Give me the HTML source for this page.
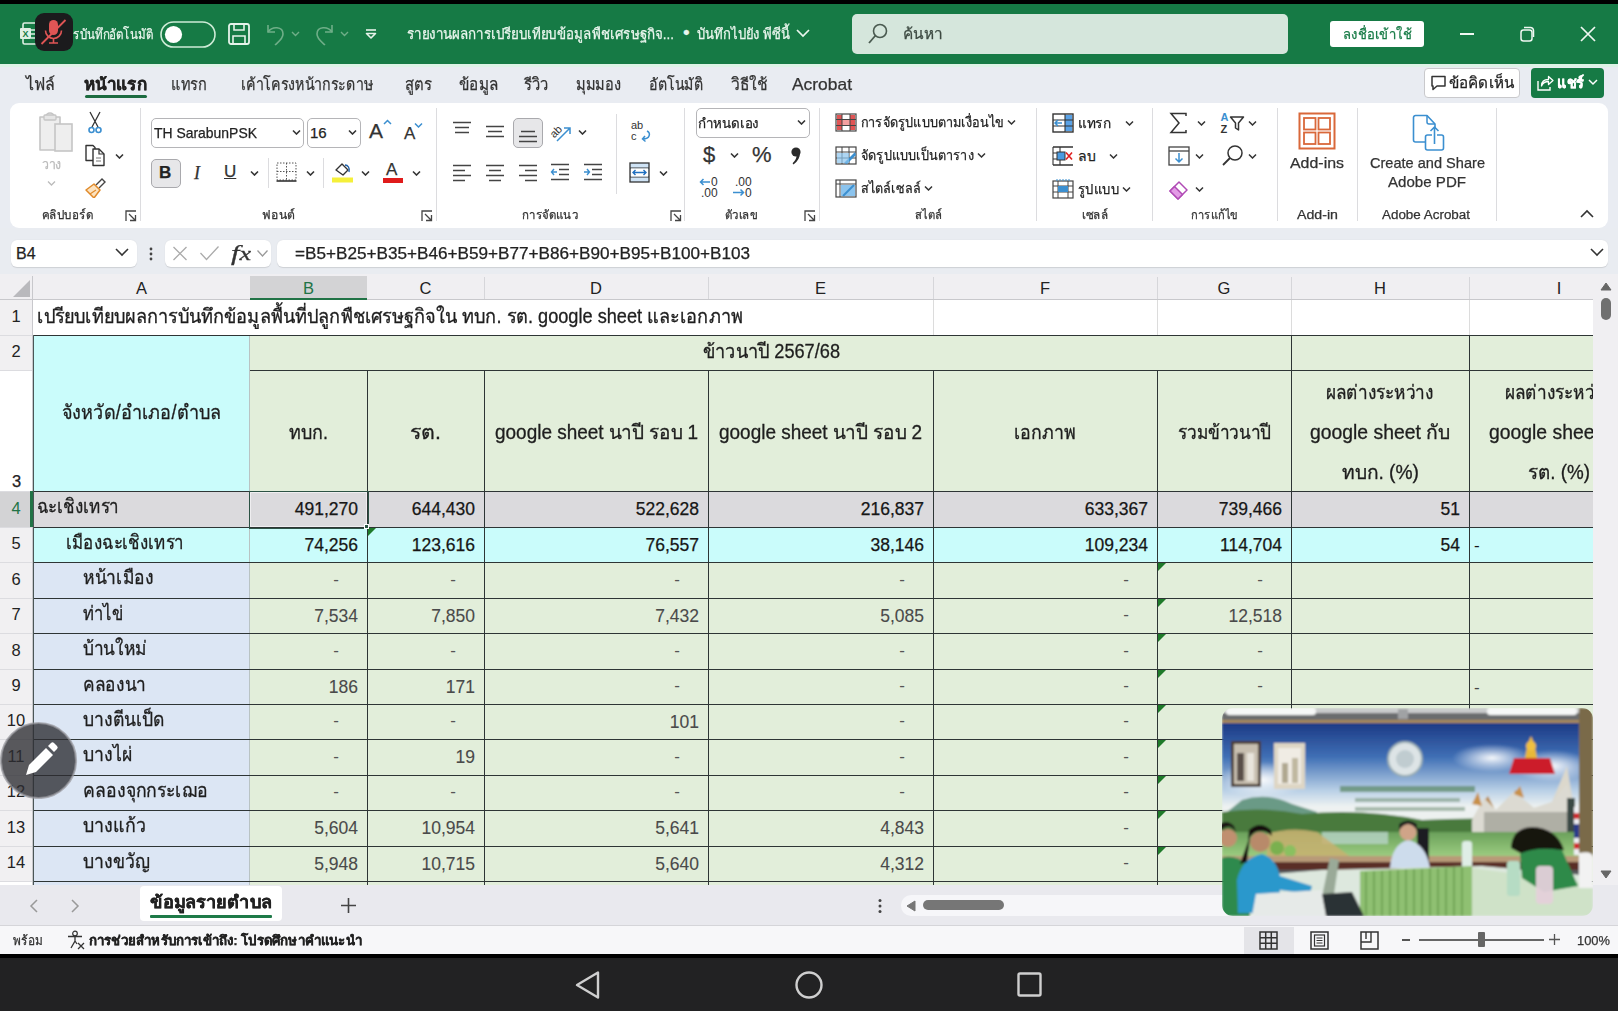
<!DOCTYPE html><html><head><meta charset="utf-8"><style>
*{margin:0;padding:0}
html,body{width:1618px;height:1011px;overflow:hidden}
body{position:relative;background:#e9ecf1;font-family:"Liberation Sans",sans-serif;color:#222}
.a{position:absolute}
.t{white-space:nowrap;line-height:1;-webkit-text-stroke-width:0.25px}
.ch{display:flex;align-items:center;justify-content:center;font-size:16.5px}
.rh{display:flex;align-items:center;justify-content:center;font-size:16.5px;padding-bottom:4px;box-sizing:border-box}
.c{position:absolute;white-space:nowrap;overflow:hidden;display:flex;align-items:center;font-size:17px;line-height:1;box-sizing:border-box}
.r{justify-content:flex-end;padding-right:9px}
.d{justify-content:flex-end;padding-right:28px;padding-bottom:4px}
.ctr{justify-content:center}
</style></head><body>
<div class="a" style="left:0px;top:0px;width:1618px;height:4px;background:#000"></div>
<div class="a" style="left:0px;top:4px;width:1618px;height:60px;background:#167a45"></div>
<div class="a" style="left:0px;top:64px;width:1618px;height:3px;background:#ddf3e6"></div>
<div class="a" style="left:0px;top:67px;width:1618px;height:161px;background:#e9ecf2"></div>
<svg class="a" style="left:19px;top:22px;" width="20" height="24" viewBox="0 0 20 24"><rect x="4" y="1" width="15" height="21" rx="1.5" fill="none" stroke="#dff0e4" stroke-width="1.6"/><rect x="1" y="6" width="11" height="11" rx="1" fill="#dff0e4"/><text x="6.5" y="15" font-size="9" font-family="Liberation Sans" font-weight="bold" text-anchor="middle" fill="#167a45">X</text><path d="M12 8h6M12 12h6M12 16h6" stroke="#dff0e4" stroke-width="1.4"/></svg>
<svg class="a" style="left:35px;top:13px;" width="38" height="38" viewBox="0 0 38 38"><rect x="0" y="0" width="38" height="38" rx="9" fill="#1b1b1d"/><rect x="14" y="7" width="9" height="15" rx="4.5" fill="#e05555"/><path d="M10.5 17.5 a8 8 0 0 0 16 0" fill="none" stroke="#e05555" stroke-width="1.6"/><path d="M18.5 25.5 v4 M14 30 h9" stroke="#e05555" stroke-width="1.6"/><path d="M6.5 31 L30.5 7" stroke="#e05555" stroke-width="1.8"/></svg>
<div class="a t" id="f1" style="left:73.0px;top:24px;font-size:14px;color:#eaf6ee;line-height:20px;transform:scaleX(0.8247);transform-origin:0 0">รบันทึกอัตโนมัติ</div>
<svg class="a" style="left:160px;top:21px;" width="56" height="27" viewBox="0 0 56 27"><rect x="1" y="1" width="54" height="25" rx="12.5" fill="none" stroke="#cdebd6" stroke-width="1.6"/><circle cx="13.5" cy="13.5" r="8.6" fill="#fff"/></svg>
<svg class="a" style="left:228px;top:23px;" width="22" height="22" viewBox="0 0 22 22"><rect x="1" y="1" width="20" height="20" rx="2" fill="none" stroke="#e6f3ea" stroke-width="1.8"/><path d="M6 1 v6 h10 v-6" fill="none" stroke="#e6f3ea" stroke-width="1.6"/><path d="M5 21 v-8 h12 v8" fill="none" stroke="#e6f3ea" stroke-width="1.6"/></svg>
<svg class="a" style="left:263px;top:22px;" width="40" height="24" viewBox="0 0 40 24"><path d="M5 3 v7 h7" fill="none" stroke="#6fae88" stroke-width="1.6"/><path d="M5 10 C9 4 20 4 20 12 C20 17 15 20 12 23" fill="none" stroke="#6fae88" stroke-width="1.6"/><path d="M29 10 l3.5 3.5 l3.5 -3.5" fill="none" stroke="#6fae88" stroke-width="1.4"/></svg>
<svg class="a" style="left:312px;top:22px;" width="40" height="24" viewBox="0 0 40 24"><path d="M20 3 v7 h-7" fill="none" stroke="#6fae88" stroke-width="1.6"/><path d="M20 10 C16 4 5 4 5 12 C5 17 10 20 13 23" fill="none" stroke="#6fae88" stroke-width="1.6"/><path d="M29 10 l3.5 3.5 l3.5 -3.5" fill="none" stroke="#6fae88" stroke-width="1.4"/></svg>
<svg class="a" style="left:364px;top:27px;" width="14" height="14" viewBox="0 0 14 14"><path d="M2 3 h10" stroke="#e6f3ea" stroke-width="1.6"/><path d="M2.5 6.5 l4.5 4.5 l4.5 -4.5 z" fill="none" stroke="#e6f3ea" stroke-width="1.6" stroke-linejoin="round"/></svg>
<div class="a t" id="f2" style="left:407.0px;top:24px;font-size:14.5px;color:#eaf6ee;line-height:20px;transform:scaleX(0.9236);transform-origin:0 0">รายงานผลการเปรียบเทียบข้อมูลพืชเศรษฐกิจ...</div>
<div class="a t" style="left:683px;top:22px;font-size:19px;color:#eaf6ee;line-height:22px">•</div>
<div class="a t" id="f3" style="left:697.0px;top:24px;font-size:14.5px;color:#eaf6ee;line-height:20px;transform:scaleX(0.9026);transform-origin:0 0">บันทึกไปยัง พีซีนี้</div>
<svg class="a" style="left:795px;top:27px;" width="16" height="12" viewBox="0 0 16 12"><path d="M2 3 l6 6 l6 -6" fill="none" stroke="#eaf6ee" stroke-width="1.7"/></svg>
<div class="a" style="left:852px;top:14px;width:436px;height:40px;background:#d5e6dc;border-radius:5px"></div>
<svg class="a" style="left:866px;top:22px;" width="24" height="24" viewBox="0 0 24 24"><circle cx="14" cy="9" r="6.5" fill="none" stroke="#4a5a50" stroke-width="1.6"/><path d="M9.5 13.5 L3 21" stroke="#4a5a50" stroke-width="1.8"/></svg>
<div class="a t" id="f4" style="left:903.0px;top:24px;font-size:15px;color:#3d4a42;line-height:20px;transform:scaleX(1.0263);transform-origin:0 0">ค้นหา</div>
<div class="a" style="left:1330px;top:21px;width:94px;height:26px;background:#fff;border-radius:3px"></div>
<div class="a t" id="f5" style="left:1343.0px;top:24px;font-size:14px;color:#167a45;line-height:20px;transform:scaleX(0.9324);transform-origin:0 0">ลงชื่อเข้าใช้</div>
<div class="a" style="left:1460px;top:33px;width:14px;height:1.5px;background:#f0f8f2"></div>
<svg class="a" style="left:1518px;top:25px;" width="20" height="18" viewBox="0 0 20 18"><rect x="3" y="5" width="11" height="11" rx="2.5" fill="none" stroke="#f0f8f2" stroke-width="1.5"/><path d="M6 2.5 h6.5 a3 3 0 0 1 3 3 v6.5" fill="none" stroke="#f0f8f2" stroke-width="1.5"/></svg>
<svg class="a" style="left:1579px;top:25px;" width="18" height="18" viewBox="0 0 18 18"><path d="M2 2 L16 16 M16 2 L2 16" stroke="#f0f8f2" stroke-width="1.7"/></svg>
<div class="a t" id="f6" style="left:26.0px;top:73px;font-size:16.5px;color:#333;line-height:22px;transform:scaleX(0.9667);transform-origin:0 0">ไฟล์</div>
<div class="a t" id="f7" style="left:84.0px;top:73px;font-size:16.5px;color:#222;line-height:22px;font-weight:bold;transform:scaleX(1.0328);transform-origin:0 0">หน้าแรก</div>
<div class="a t" id="f8" style="left:171.0px;top:73px;font-size:16.5px;color:#333;line-height:22px;transform:scaleX(0.8780);transform-origin:0 0">แทรก</div>
<div class="a t" id="f9" style="left:241.0px;top:73px;font-size:16.5px;color:#333;line-height:22px;transform:scaleX(0.8627);transform-origin:0 0">เค้าโครงหน้ากระดาษ</div>
<div class="a t" id="f10" style="left:405.0px;top:73px;font-size:16.5px;color:#333;line-height:22px;transform:scaleX(0.9000);transform-origin:0 0">สูตร</div>
<div class="a t" id="f11" style="left:459.0px;top:73px;font-size:16.5px;color:#333;line-height:22px;transform:scaleX(0.9286);transform-origin:0 0">ข้อมูล</div>
<div class="a t" id="f12" style="left:524.0px;top:73px;font-size:16.5px;color:#333;line-height:22px;transform:scaleX(0.8889);transform-origin:0 0">รีวิว</div>
<div class="a t" id="f13" style="left:576.0px;top:73px;font-size:16.5px;color:#333;line-height:22px;transform:scaleX(0.8824);transform-origin:0 0">มุมมอง</div>
<div class="a t" id="f14" style="left:649.0px;top:73px;font-size:16.5px;color:#333;line-height:22px;transform:scaleX(0.8571);transform-origin:0 0">อัตโนมัติ</div>
<div class="a t" id="f15" style="left:731.0px;top:73px;font-size:16.5px;color:#333;line-height:22px;transform:scaleX(0.9474);transform-origin:0 0">วิธีใช้</div>
<div class="a t" id="f16" style="left:792.0px;top:73px;font-size:16.5px;color:#333;line-height:22px;transform:scaleX(1.0549);transform-origin:0 0">Acrobat</div>
<div class="a" style="left:85px;top:95px;width:62px;height:3px;background:#1c6b40;border-radius:2px"></div>
<div class="a" style="left:1424px;top:68px;width:96px;height:30px;background:#fff;border:1px solid #c9c9cc;border-radius:4px;box-sizing:border-box"></div>
<svg class="a" style="left:1430px;top:74px;" width="18" height="18" viewBox="0 0 18 18"><path d="M2 2.5 h13 v9.5 h-8 l-4 3.5 v-3.5 h-1 z" fill="none" stroke="#333" stroke-width="1.5" stroke-linejoin="round"/></svg>
<div class="a t" id="f17" style="left:1449.0px;top:73px;font-size:15px;color:#222;line-height:20px;transform:scaleX(1.0156);transform-origin:0 0">ข้อคิดเห็น</div>
<div class="a" style="left:1531px;top:68px;width:73px;height:30px;background:#167a45;border-radius:4px"></div>
<svg class="a" style="left:1536px;top:74px;" width="18" height="18" viewBox="0 0 18 18"><path d="M2 7 v9 h12 v-3" fill="none" stroke="#fff" stroke-width="1.4"/><path d="M5.5 12 c0-4.5 2.5-6.5 7-6.5 v-3 l4.5 4 l-4.5 4 v-3 c-3.5 0-5.5 1-7 4.5z" fill="none" stroke="#fff" stroke-width="1.3" stroke-linejoin="round"/></svg>
<div class="a t" id="f18" style="left:1557.0px;top:73px;font-size:15px;color:#fff;line-height:20px;font-weight:bold;transform:scaleX(0.9643);transform-origin:0 0">แชร์</div>
<svg class="a" style="left:1588px;top:78px;" width="10" height="8" viewBox="0 0 10 8"><path d="M1 2 l4 4 l4 -4" fill="none" stroke="#fff" stroke-width="1.5"/></svg>
<div class="a" style="left:10px;top:103px;width:1598px;height:125px;background:#fff;border-radius:9px"></div>
<svg class="a" style="left:36px;top:112px;" width="38" height="41" viewBox="0 0 38 41"><path d="M4 5 h6 a4 4 0 0 1 8 0 h6 v9 h-4 v24 h-16 z" fill="#eee" stroke="#c5c5c5" stroke-width="1.6" stroke-linejoin="round"/><rect x="8" y="3" width="12" height="5" rx="1" fill="#e5e5e5" stroke="#c5c5c5" stroke-width="1.3"/><rect x="19" y="12" width="17" height="27" fill="#eee" stroke="#c5c5c5" stroke-width="1.6"/></svg>
<div class="a t" id="f19" style="left:42.0px;top:157px;font-size:13px;color:#bbb;line-height:16px;transform:scaleX(0.9500);transform-origin:0 0">วาง</div>
<svg class="a" style="left:47px;top:180px;" width="9" height="6" viewBox="0 0 9 6"><path d="M1 1.5 l3.5 3.5 l3.5 -3.5" fill="none" stroke="#bbb" stroke-width="1.3"/></svg>
<svg class="a" style="left:87px;top:111px;" width="16" height="23" viewBox="0 0 16 23"><path d="M3 1 L11 16 M13 1 L5 16" stroke="#333" stroke-width="1.3"/><circle cx="4.5" cy="19" r="2.5" fill="none" stroke="#3b8fd0" stroke-width="1.6"/><circle cx="11.5" cy="19" r="2.5" fill="none" stroke="#3b8fd0" stroke-width="1.6"/></svg>
<svg class="a" style="left:84px;top:144px;" width="23" height="23" viewBox="0 0 23 23"><path d="M2 1.5 h7 l2 2 v13 h-9 z" fill="#fff" stroke="#333" stroke-width="1.4" stroke-linejoin="round"/><path d="M9 5 h6 l5 5 v11.5 h-11 z" fill="#fff" stroke="#333" stroke-width="1.4" stroke-linejoin="round"/><path d="M15 5 v5 h5" fill="none" stroke="#333" stroke-width="1.2"/><path d="M12 14 h5 M12 17 h5" stroke="#777" stroke-width="1"/></svg>
<svg class="a" style="left:115px;top:153px;" width="9" height="6" viewBox="0 0 9 6"><path d="M1 1.5 l3.5 3.5 l3.5 -3.5" fill="none" stroke="#333" stroke-width="1.6"/></svg>
<svg class="a" style="left:84px;top:176px;" width="24" height="22" viewBox="0 0 24 22"><path d="M12 9 l6-6 l3 3 l-6 6" fill="#fff" stroke="#444" stroke-width="1.4"/><path d="M2 14 l8-6 l6 6 l-6 8 z" fill="#fce3c0" stroke="#e08a2a" stroke-width="1.5" stroke-linejoin="round"/><path d="M6 18 l6-4" stroke="#e08a2a" stroke-width="1.2"/></svg>
<div class="a t" id="f20" style="left:42.0px;top:207px;font-size:12.5px;color:#333;line-height:16px;transform:scaleX(0.9273);transform-origin:0 0">คลิปบอร์ด</div>
<svg class="a" style="left:125px;top:210px;" width="12" height="12" viewBox="0 0 12 12"><path d="M1 11 V1 H11" fill="none" stroke="#444" stroke-width="1.3"/><path d="M4 4 L10.5 10.5 M5 10.5 H10.5 V5" fill="none" stroke="#444" stroke-width="1.3"/></svg>
<div class="a" style="left:140px;top:108px;width:1px;height:113px;background:#dcdcdf"></div>
<div class="a" style="left:151px;top:118px;width:153px;height:30px;border:1px solid #b5b5b8;border-radius:5px;box-sizing:border-box;background:#fff"></div>
<div class="a t" id="f21" style="left:154.0px;top:124px;font-size:15px;color:#222;line-height:18px;transform:scaleX(0.9288);transform-origin:0 0">TH SarabunPSK</div>
<svg class="a" style="left:292px;top:129px;" width="9" height="6" viewBox="0 0 9 6"><path d="M1 1.5 l3.5 3.5 l3.5 -3.5" fill="none" stroke="#333" stroke-width="1.6"/></svg>
<div class="a" style="left:307px;top:118px;width:54px;height:30px;border:1px solid #b5b5b8;border-radius:5px;box-sizing:border-box;background:#fff"></div>
<div class="a t" style="left:310px;top:124px;font-size:15px;color:#222;line-height:18px">16</div>
<svg class="a" style="left:348px;top:129px;" width="9" height="6" viewBox="0 0 9 6"><path d="M1 1.5 l3.5 3.5 l3.5 -3.5" fill="none" stroke="#333" stroke-width="1.6"/></svg>
<div class="a t" style="left:369px;top:120px;font-size:21px;color:#333;line-height:22px">A</div>
<svg class="a" style="left:383px;top:119px;" width="9" height="6" viewBox="0 0 9 6"><path d="M1 5 l3.5 -3.5 l3.5 3.5" fill="none" stroke="#3b8fd0" stroke-width="1.5"/></svg>
<div class="a t" style="left:404px;top:125px;font-size:17px;color:#333;line-height:18px">A</div>
<svg class="a" style="left:414px;top:122px;" width="9" height="6" viewBox="0 0 9 6"><path d="M1 1.5 l3.5 3.5 l3.5 -3.5" fill="none" stroke="#3b8fd0" stroke-width="1.5"/></svg>
<div class="a" style="left:151px;top:159px;width:30px;height:29px;background:#e7e7e9;border:1px solid #a9a9ad;border-radius:5px;box-sizing:border-box"></div>
<div class="a t" style="left:159px;top:164px;font-size:17px;color:#222;line-height:18px;font-weight:bold">B</div>
<div class="a t" style="left:194px;top:164px;font-size:18px;color:#333;line-height:18px;font-style:italic;font-family:Liberation Serif">I</div>
<div class="a t" style="left:224px;top:163px;font-size:17px;color:#333;line-height:18px;text-decoration:underline">U</div>
<svg class="a" style="left:250px;top:170px;" width="9" height="6" viewBox="0 0 9 6"><path d="M1 1.5 l3.5 3.5 l3.5 -3.5" fill="none" stroke="#333" stroke-width="1.6"/></svg>
<div class="a" style="left:268px;top:158px;width:1px;height:30px;background:#dcdcdf"></div>
<svg class="a" style="left:275px;top:161px;" width="23" height="22" viewBox="0 0 23 22"><path d="M2 2 h19 v17 h-19 z M11.5 2 v17 M2 10.5 h19" fill="none" stroke="#555" stroke-width="1" stroke-dasharray="1.5 1.5"/><path d="M1.5 20 h20" stroke="#333" stroke-width="1.6"/></svg>
<svg class="a" style="left:306px;top:170px;" width="9" height="6" viewBox="0 0 9 6"><path d="M1 1.5 l3.5 3.5 l3.5 -3.5" fill="none" stroke="#333" stroke-width="1.6"/></svg>
<div class="a" style="left:323px;top:158px;width:1px;height:30px;background:#dcdcdf"></div>
<svg class="a" style="left:332px;top:161px;" width="22" height="23" viewBox="0 0 22 23"><path d="M4 9 l6-6 l6 6 l-5 5 z" fill="#fff" stroke="#333" stroke-width="1.4" stroke-linejoin="round"/><path d="M13 4 c3 0 5 3 4 7" fill="none" stroke="#1f5fa8" stroke-width="1.4"/><rect x="0" y="16.5" width="21" height="5" fill="#f5f03a"/></svg>
<svg class="a" style="left:361px;top:170px;" width="9" height="6" viewBox="0 0 9 6"><path d="M1 1.5 l3.5 3.5 l3.5 -3.5" fill="none" stroke="#333" stroke-width="1.6"/></svg>
<div class="a t" style="left:386px;top:161px;font-size:17px;color:#333;line-height:18px">A</div>
<div class="a" style="left:383px;top:178px;width:20px;height:5px;background:#e01b1b"></div>
<svg class="a" style="left:412px;top:170px;" width="9" height="6" viewBox="0 0 9 6"><path d="M1 1.5 l3.5 3.5 l3.5 -3.5" fill="none" stroke="#333" stroke-width="1.6"/></svg>
<div class="a t" id="f22" style="left:262.0px;top:207px;font-size:12.5px;color:#333;line-height:16px;transform:scaleX(0.9706);transform-origin:0 0">ฟอนต์</div>
<svg class="a" style="left:421px;top:210px;" width="12" height="12" viewBox="0 0 12 12"><path d="M1 11 V1 H11" fill="none" stroke="#444" stroke-width="1.3"/><path d="M4 4 L10.5 10.5 M5 10.5 H10.5 V5" fill="none" stroke="#444" stroke-width="1.3"/></svg>
<div class="a" style="left:436px;top:108px;width:1px;height:113px;background:#dcdcdf"></div>
<svg class="a" style="left:452px;top:121px;" width="21" height="13" viewBox="0 0 21 13"><path d="M1 1.5 H19 M3 6.5 H17 M3 11.5 H17 " stroke="#444" stroke-width="1.7"/></svg>
<svg class="a" style="left:485px;top:125px;" width="21" height="13" viewBox="0 0 21 13"><path d="M1 1.5 H19 M3 6.5 H17 M1 11.5 H19 " stroke="#444" stroke-width="1.7"/></svg>
<div class="a" style="left:513px;top:118px;width:30px;height:30px;background:#e7e7e9;border:1px solid #a9a9ad;border-radius:5px;box-sizing:border-box"></div>
<svg class="a" style="left:518px;top:130px;" width="21" height="13" viewBox="0 0 21 13"><path d="M3 1.5 H17 M1 6.5 H19 M1 11.5 H19 " stroke="#444" stroke-width="1.7"/></svg>
<svg class="a" style="left:549px;top:120px;" width="24" height="24" viewBox="0 0 24 24"><text x="0" y="14" font-size="11" font-family="Liberation Sans" fill="#333" transform="rotate(-45 8 10)">ab</text><path d="M8 21 L21 8 M15 8 h6 v6" fill="none" stroke="#3b8fd0" stroke-width="1.5"/></svg>
<svg class="a" style="left:578px;top:129px;" width="9" height="6" viewBox="0 0 9 6"><path d="M1 1.5 l3.5 3.5 l3.5 -3.5" fill="none" stroke="#333" stroke-width="1.6"/></svg>
<svg class="a" style="left:452px;top:164px;" width="21" height="18" viewBox="0 0 21 18"><path d="M1 1.5 H19 M1 6.5 H13 M1 11.5 H19 M1 16.5 H13 " stroke="#444" stroke-width="1.7"/></svg>
<svg class="a" style="left:485px;top:164px;" width="21" height="18" viewBox="0 0 21 18"><path d="M1 1.5 H19 M4 6.5 H16 M1 11.5 H19 M4 16.5 H16 " stroke="#444" stroke-width="1.7"/></svg>
<svg class="a" style="left:518px;top:164px;" width="21" height="18" viewBox="0 0 21 18"><path d="M1 1.5 H19 M7 6.5 H19 M1 11.5 H19 M7 16.5 H19 " stroke="#444" stroke-width="1.7"/></svg>
<svg class="a" style="left:550px;top:163px;" width="22" height="20" viewBox="0 0 22 20"><path d="M1 1.5 H19 M9 6.5 H19 M9 11.5 H19 M1 16.5 H19" stroke="#444" stroke-width="1.7"/><path d="M7 9 H1.5 M4 6 L1.5 9 L4 12" fill="none" stroke="#3b8fd0" stroke-width="1.4"/></svg>
<svg class="a" style="left:583px;top:163px;" width="22" height="20" viewBox="0 0 22 20"><path d="M1 1.5 H19 M9 6.5 H19 M9 11.5 H19 M1 16.5 H19" stroke="#444" stroke-width="1.7"/><path d="M1 9 H6.5 M4 6 L6.5 9 L4 12" fill="none" stroke="#3b8fd0" stroke-width="1.4"/></svg>
<div class="a" style="left:616px;top:114px;width:1px;height:80px;background:#dcdcdf"></div>
<svg class="a" style="left:630px;top:119px;" width="24" height="25" viewBox="0 0 24 25"><text x="1" y="10" font-size="11" font-family="Liberation Sans" fill="#333">ab</text><text x="1" y="21" font-size="11" font-family="Liberation Sans" fill="#333">c</text><path d="M17 12 c4 2 3 8 -4 8 M15 17 l-2.5 3 l3 2.5" fill="none" stroke="#3b8fd0" stroke-width="1.5"/></svg>
<svg class="a" style="left:629px;top:162px;" width="21" height="21" viewBox="0 0 21 21"><rect x="1" y="1" width="19" height="19" fill="#cfe3f5" stroke="#333" stroke-width="1.3"/><path d="M1 6 H20 M1 15 H20" stroke="#333" stroke-width="1"/><rect x="2" y="6.5" width="17" height="8" fill="#fff"/><path d="M4 10.5 H17 M6.5 8 L4 10.5 L6.5 13 M14.5 8 L17 10.5 L14.5 13" fill="none" stroke="#1f6fc0" stroke-width="1.4"/></svg>
<svg class="a" style="left:659px;top:170px;" width="9" height="6" viewBox="0 0 9 6"><path d="M1 1.5 l3.5 3.5 l3.5 -3.5" fill="none" stroke="#333" stroke-width="1.6"/></svg>
<div class="a t" id="f23" style="left:522.0px;top:207px;font-size:12.5px;color:#333;line-height:16px;transform:scaleX(0.9180);transform-origin:0 0">การจัดแนว</div>
<svg class="a" style="left:670px;top:210px;" width="12" height="12" viewBox="0 0 12 12"><path d="M1 11 V1 H11" fill="none" stroke="#444" stroke-width="1.3"/><path d="M4 4 L10.5 10.5 M5 10.5 H10.5 V5" fill="none" stroke="#444" stroke-width="1.3"/></svg>
<div class="a" style="left:684px;top:108px;width:1px;height:113px;background:#dcdcdf"></div>
<div class="a" style="left:696px;top:108px;width:114px;height:30px;border:1px solid #b5b5b8;border-radius:5px;box-sizing:border-box;background:#fff"></div>
<div class="a t" id="f24" style="left:698.0px;top:114px;font-size:14px;color:#222;line-height:18px;transform:scaleX(0.9531);transform-origin:0 0">กำหนดเอง</div>
<svg class="a" style="left:797px;top:119px;" width="9" height="6" viewBox="0 0 9 6"><path d="M1 1.5 l3.5 3.5 l3.5 -3.5" fill="none" stroke="#333" stroke-width="1.6"/></svg>
<div class="a t" style="left:703px;top:144px;font-size:22px;color:#333;line-height:22px">$</div>
<svg class="a" style="left:730px;top:152px;" width="9" height="6" viewBox="0 0 9 6"><path d="M1 1.5 l3.5 3.5 l3.5 -3.5" fill="none" stroke="#333" stroke-width="1.6"/></svg>
<div class="a t" style="left:752px;top:144px;font-size:22px;color:#333;line-height:22px">%</div>
<svg class="a" style="left:790px;top:146px;" width="12" height="20" viewBox="0 0 12 20"><circle cx="6" cy="6" r="4.6" fill="#2a2a2a"/><path d="M9.8 6.5 Q10.5 13 3.5 18.5 L2.6 17.2 Q7 13 6.5 9 Z" fill="#2a2a2a"/></svg>
<svg class="a" style="left:698px;top:175px;" width="26" height="24" viewBox="0 0 26 24"><text x="13" y="10.5" font-size="12" font-family="Liberation Sans" fill="#333">0</text><text x="3" y="22" font-size="12" font-family="Liberation Sans" fill="#333">.00</text><path d="M12 7 H2.5 M5.5 4 L2.5 7 L5.5 10" fill="none" stroke="#3b8fd0" stroke-width="1.5"/></svg>
<svg class="a" style="left:731px;top:175px;" width="26" height="24" viewBox="0 0 26 24"><text x="4" y="10.5" font-size="12" font-family="Liberation Sans" fill="#333">.00</text><text x="14" y="22" font-size="12" font-family="Liberation Sans" fill="#333">0</text><path d="M2 17.5 H12.5 M9.5 14.5 L12.5 17.5 L9.5 20.5" fill="none" stroke="#3b8fd0" stroke-width="1.5"/></svg>
<div class="a t" id="f25" style="left:725.2px;top:207px;font-size:12.5px;color:#333;line-height:16px;transform:scaleX(0.9167);transform-origin:0 0">ตัวเลข</div>
<svg class="a" style="left:804px;top:210px;" width="12" height="12" viewBox="0 0 12 12"><path d="M1 11 V1 H11" fill="none" stroke="#444" stroke-width="1.3"/><path d="M4 4 L10.5 10.5 M5 10.5 H10.5 V5" fill="none" stroke="#444" stroke-width="1.3"/></svg>
<div class="a" style="left:819px;top:108px;width:1px;height:113px;background:#dcdcdf"></div>
<svg class="a" style="left:835px;top:113px;" width="22" height="19" viewBox="0 0 22 19"><rect x="1" y="1" width="20" height="17" fill="#fff" stroke="#444" stroke-width="1.2"/><rect x="2" y="2" width="5" height="15" fill="#e05555"/><rect x="15" y="2" width="5" height="15" fill="#e05555"/><rect x="7" y="7" width="8" height="5" fill="#f4a0a0"/><path d="M1 6.5 H21 M1 12.5 H21 M7 1 V18 M15 1 V18" stroke="#444" stroke-width="1"/></svg>
<div class="a t" id="f26" style="left:861.0px;top:113px;font-size:14px;color:#222;line-height:18px;transform:scaleX(0.9051);transform-origin:0 0">การจัดรูปแบบตามเงื่อนไข</div>
<svg class="a" style="left:1007px;top:119px;" width="9" height="6" viewBox="0 0 9 6"><path d="M1 1.5 l3.5 3.5 l3.5 -3.5" fill="none" stroke="#333" stroke-width="1.5"/></svg>
<svg class="a" style="left:835px;top:146px;" width="22" height="19" viewBox="0 0 22 19"><rect x="1" y="1" width="20" height="17" fill="#fff" stroke="#444" stroke-width="1.2"/><path d="M1 6 H21 M1 12 H21 M7 1 V18 M14 1 V18" stroke="#444" stroke-width="1"/><path d="M9 17 L20 6 L21 9 L12 18 z" fill="#3b8fd0"/><path d="M2 7 h12 v10 h-12z" fill="#8cc4ee" opacity=".7"/></svg>
<div class="a t" id="f27" style="left:861.0px;top:146px;font-size:14px;color:#222;line-height:18px;transform:scaleX(0.9040);transform-origin:0 0">จัดรูปแบบเป็นตาราง</div>
<svg class="a" style="left:977px;top:152px;" width="9" height="6" viewBox="0 0 9 6"><path d="M1 1.5 l3.5 3.5 l3.5 -3.5" fill="none" stroke="#333" stroke-width="1.5"/></svg>
<svg class="a" style="left:835px;top:179px;" width="22" height="19" viewBox="0 0 22 19"><rect x="1" y="1" width="20" height="17" fill="#fff" stroke="#444" stroke-width="1.2"/><path d="M1 5 H21 M5 1 V18" stroke="#444" stroke-width="1"/><path d="M6 6 h14 v11 h-14z" fill="#8cc4ee"/><path d="M8 17 L19 6" stroke="#3b8fd0" stroke-width="2"/></svg>
<div class="a t" id="f28" style="left:861.0px;top:179px;font-size:14px;color:#222;line-height:18px;transform:scaleX(0.8955);transform-origin:0 0">สไตล์เซลล์</div>
<svg class="a" style="left:924px;top:185px;" width="9" height="6" viewBox="0 0 9 6"><path d="M1 1.5 l3.5 3.5 l3.5 -3.5" fill="none" stroke="#333" stroke-width="1.5"/></svg>
<div class="a t" id="f29" style="left:914.7px;top:207px;font-size:12.5px;color:#333;line-height:16px;transform:scaleX(0.9000);transform-origin:0 0">สไตล์</div>
<div class="a" style="left:1036px;top:108px;width:1px;height:113px;background:#dcdcdf"></div>
<svg class="a" style="left:1052px;top:113px;" width="22" height="20" viewBox="0 0 22 20"><rect x="1" y="1" width="20" height="18" fill="#fff" stroke="#333" stroke-width="1.4"/><rect x="13" y="2" width="7" height="16" fill="#5aa2e6"/><path d="M1 7 H21 M1 13 H21 M13 1 V19" stroke="#333" stroke-width="1.1"/><path d="M10 10 H3 M6 7 L3 10 L6 13" fill="none" stroke="#3b8fd0" stroke-width="1.5"/></svg>
<div class="a t" id="f30" style="left:1078.0px;top:114px;font-size:14px;color:#222;line-height:18px;transform:scaleX(0.9706);transform-origin:0 0">แทรก</div>
<svg class="a" style="left:1125px;top:120px;" width="9" height="6" viewBox="0 0 9 6"><path d="M1 1.5 l3.5 3.5 l3.5 -3.5" fill="none" stroke="#333" stroke-width="1.5"/></svg>
<svg class="a" style="left:1052px;top:146px;" width="22" height="20" viewBox="0 0 22 20"><path d="M1 1 H21 M1 19 H21" stroke="#333" stroke-width="1.4"/><path d="M1 1 V19 M8 1 V19" stroke="#333" stroke-width="1.1"/><path d="M1 7 H13 M1 13 H13" stroke="#333" stroke-width="1.1"/><rect x="5" y="6" width="8" height="8" fill="#4a9ae0" stroke="#333" stroke-width="1"/><path d="M14 6.5 l6 7 M20 6.5 l-6 7" stroke="#e02020" stroke-width="1.6"/></svg>
<div class="a t" id="f31" style="left:1078.0px;top:147px;font-size:14px;color:#222;line-height:18px;transform:scaleX(1.0000);transform-origin:0 0">ลบ</div>
<svg class="a" style="left:1109px;top:153px;" width="9" height="6" viewBox="0 0 9 6"><path d="M1 1.5 l3.5 3.5 l3.5 -3.5" fill="none" stroke="#333" stroke-width="1.5"/></svg>
<svg class="a" style="left:1052px;top:179px;" width="22" height="20" viewBox="0 0 22 20"><rect x="1" y="2" width="20" height="17" fill="#fff" stroke="#444" stroke-width="1.2"/><path d="M1 7 H21 M1 13 H21 M6 2 V19 M16 2 V19" stroke="#444" stroke-width="1"/><rect x="6" y="7" width="10" height="6" fill="#3b8fd0"/><path d="M4 1 H18" stroke="#3b8fd0" stroke-width="1.2" stroke-dasharray="2 1"/></svg>
<div class="a t" id="f32" style="left:1078.0px;top:180px;font-size:14px;color:#222;line-height:18px;transform:scaleX(0.9318);transform-origin:0 0">รูปแบบ</div>
<svg class="a" style="left:1122px;top:186px;" width="9" height="6" viewBox="0 0 9 6"><path d="M1 1.5 l3.5 3.5 l3.5 -3.5" fill="none" stroke="#333" stroke-width="1.5"/></svg>
<div class="a t" id="f33" style="left:1082.3px;top:207px;font-size:12.5px;color:#333;line-height:16px;transform:scaleX(0.9286);transform-origin:0 0">เซลล์</div>
<div class="a" style="left:1152px;top:108px;width:1px;height:113px;background:#dcdcdf"></div>
<svg class="a" style="left:1169px;top:112px;" width="20" height="22" viewBox="0 0 20 22"><path d="M17 4 V1.5 H2 L10 11 L2 20.5 H17 V18" fill="none" stroke="#333" stroke-width="1.5" stroke-linejoin="miter"/></svg>
<svg class="a" style="left:1197px;top:120px;" width="9" height="6" viewBox="0 0 9 6"><path d="M1 1.5 l3.5 3.5 l3.5 -3.5" fill="none" stroke="#333" stroke-width="1.5"/></svg>
<svg class="a" style="left:1220px;top:111px;" width="26" height="24" viewBox="0 0 26 24"><text x="0.5" y="10" font-size="11" font-weight="bold" font-family="Liberation Sans" fill="#3b8fd0">A</text><text x="0.5" y="22" font-size="11" font-weight="bold" font-family="Liberation Sans" fill="#333">Z</text><path d="M10.5 6 H23.5 L18.5 12 V19 L15.5 17 V12 z" fill="none" stroke="#333" stroke-width="1.5" stroke-linejoin="round"/></svg>
<svg class="a" style="left:1248px;top:120px;" width="9" height="6" viewBox="0 0 9 6"><path d="M1 1.5 l3.5 3.5 l3.5 -3.5" fill="none" stroke="#333" stroke-width="1.5"/></svg>
<svg class="a" style="left:1168px;top:146px;" width="22" height="20" viewBox="0 0 22 20"><rect x="1" y="1" width="20" height="18" fill="#fff" stroke="#444" stroke-width="1.3"/><path d="M1 5 H21" stroke="#444" stroke-width="1.3"/><path d="M11 7 V16 M7.5 12.5 L11 16 L14.5 12.5" fill="none" stroke="#3b8fd0" stroke-width="1.5"/></svg>
<svg class="a" style="left:1195px;top:153px;" width="9" height="6" viewBox="0 0 9 6"><path d="M1 1.5 l3.5 3.5 l3.5 -3.5" fill="none" stroke="#333" stroke-width="1.5"/></svg>
<svg class="a" style="left:1221px;top:144px;" width="24" height="23" viewBox="0 0 24 23"><circle cx="14" cy="9" r="7" fill="none" stroke="#333" stroke-width="1.5"/><path d="M9 14 L2 21" stroke="#333" stroke-width="1.8"/></svg>
<svg class="a" style="left:1248px;top:153px;" width="9" height="6" viewBox="0 0 9 6"><path d="M1 1.5 l3.5 3.5 l3.5 -3.5" fill="none" stroke="#333" stroke-width="1.5"/></svg>
<svg class="a" style="left:1167px;top:178px;" width="24" height="22" viewBox="0 0 24 22"><path d="M3 13 L12 4 L20 12 L11 21 z" fill="#fff" stroke="#b04ab5" stroke-width="1.5" stroke-linejoin="round"/><path d="M3 13 L7.5 8.5 L15.5 16.5 L11 21 z" fill="#e39be6" stroke="#b04ab5" stroke-width="1.5" stroke-linejoin="round"/></svg>
<svg class="a" style="left:1195px;top:186px;" width="9" height="6" viewBox="0 0 9 6"><path d="M1 1.5 l3.5 3.5 l3.5 -3.5" fill="none" stroke="#333" stroke-width="1.5"/></svg>
<div class="a t" id="f34" style="left:1191.2px;top:207px;font-size:12.5px;color:#333;line-height:16px;transform:scaleX(0.8868);transform-origin:0 0">การแก้ไข</div>
<div class="a" style="left:1277px;top:108px;width:1px;height:113px;background:#dcdcdf"></div>
<svg class="a" style="left:1298px;top:112px;" width="38" height="38" viewBox="0 0 38 38"><rect x="1.5" y="1.5" width="35" height="35" fill="none" stroke="#d9683a" stroke-width="2"/><rect x="6" y="6" width="11.5" height="11.5" fill="none" stroke="#d9683a" stroke-width="1.8"/><rect x="20.5" y="6" width="11.5" height="11.5" fill="none" stroke="#d9683a" stroke-width="1.8"/><rect x="6" y="20.5" width="11.5" height="11.5" fill="none" stroke="#d9683a" stroke-width="1.8"/><rect x="20.5" y="20.5" width="11.5" height="11.5" fill="none" stroke="#d9683a" stroke-width="1.8"/></svg>
<div class="a t" id="f35" style="left:1290.0px;top:154px;font-size:15px;color:#333;line-height:18px;transform:scaleX(1.0618);transform-origin:0 0">Add-ins</div>
<div class="a t" id="f36" style="left:1296.5px;top:207px;font-size:12.5px;color:#333;line-height:16px;transform:scaleX(1.1345);transform-origin:0 0">Add-in</div>
<div class="a" style="left:1357px;top:108px;width:1px;height:113px;background:#dcdcdf"></div>
<svg class="a" style="left:1412px;top:114px;" width="38" height="38" viewBox="0 0 38 38"><path d="M13 28 H3.5 a2 2 0 0 1 -2 -2 V3.5 a2 2 0 0 1 2 -2 H15 L23 10 V15" fill="none" stroke="#3b8fd0" stroke-width="1.6" stroke-linejoin="round"/><path d="M15 1.5 V8 a2 2 0 0 0 2 2 H23" fill="none" stroke="#3b8fd0" stroke-width="1.5"/><path d="M20 21 H15.5 a2 2 0 0 0 -2 2 V34 a2 2 0 0 0 2 2 H29.5 a2 2 0 0 0 2 -2 V23 a2 2 0 0 0 -2 -2 H25" fill="none" stroke="#3b8fd0" stroke-width="1.6"/><path d="M22.5 30 V13 M18.5 17 L22.5 13 L26.5 17" fill="none" stroke="#3b8fd0" stroke-width="1.6" stroke-linejoin="round"/></svg>
<div class="a t" id="f37" style="left:1370.0px;top:154px;font-size:15px;color:#333;line-height:18px;transform:scaleX(0.9711);transform-origin:0 0">Create and Share</div>
<div class="a t" id="f38" style="left:1388.0px;top:173px;font-size:15px;color:#333;line-height:18px;transform:scaleX(1.0058);transform-origin:0 0">Adobe PDF</div>
<div class="a t" id="f39" style="left:1382.0px;top:207px;font-size:12.5px;color:#333;line-height:16px;transform:scaleX(1.0730);transform-origin:0 0">Adobe Acrobat</div>
<div class="a" style="left:1496px;top:108px;width:1px;height:113px;background:#dcdcdf"></div>
<svg class="a" style="left:1579px;top:209px;" width="16" height="10" viewBox="0 0 16 10"><path d="M2 8 L8 2 L14 8" fill="none" stroke="#333" stroke-width="1.6"/></svg>
<div class="a" style="left:11px;top:240px;width:126px;height:27px;background:#fff;border-radius:6px;box-shadow:0 0.5px 1px rgba(0,0,0,.12)"></div>
<div class="a t" style="left:16px;top:245px;font-size:16px;color:#222;line-height:18px">B4</div>
<svg class="a" style="left:114px;top:247px;" width="16" height="10" viewBox="0 0 16 10"><path d="M2 2 L8 8 L14 2" fill="none" stroke="#333" stroke-width="1.6"/></svg>
<svg class="a" style="left:148px;top:247px;" width="6" height="14" viewBox="0 0 6 14"><circle cx="3" cy="2" r="1.4" fill="#444"/><circle cx="3" cy="7" r="1.4" fill="#444"/><circle cx="3" cy="12" r="1.4" fill="#444"/></svg>
<div class="a" style="left:165px;top:240px;width:106px;height:27px;background:#fff;border-radius:6px;box-shadow:0 0.5px 1px rgba(0,0,0,.12)"></div>
<svg class="a" style="left:172px;top:246px;" width="16" height="15" viewBox="0 0 16 15"><path d="M1.5 1 L14.5 14 M14.5 1 L1.5 14" stroke="#aaa" stroke-width="1.3"/></svg>
<svg class="a" style="left:199px;top:245px;" width="21" height="16" viewBox="0 0 21 16"><path d="M1.5 8 L7.5 14.5 L19.5 1.5" fill="none" stroke="#aaa" stroke-width="1.3"/></svg>
<div class="a t" id="f40" style="left:231.0px;top:242px;font-size:22px;color:#333;line-height:22px;font-family:Liberation Serif;-webkit-text-stroke:0.3px #333;transform:scaleX(1.3734);transform-origin:0 0"><i>f</i><span style="font-size:19px"><i>x</i></span></div>
<svg class="a" style="left:256px;top:249px;" width="13" height="9" viewBox="0 0 13 9"><path d="M1.5 1.5 L6.5 7 L11.5 1.5" fill="none" stroke="#999" stroke-width="1.3"/></svg>
<div class="a" style="left:277px;top:240px;width:1331px;height:27px;background:#fff;border-radius:6px;box-shadow:0 0.5px 1px rgba(0,0,0,.12)"></div>
<div class="a t" id="f41" style="left:295.0px;top:245px;font-size:16px;color:#222;line-height:18px;transform:scaleX(1.0710);transform-origin:0 0">=B5+B25+B35+B46+B59+B77+B86+B90+B95+B100+B103</div>
<svg class="a" style="left:1589px;top:247px;" width="16" height="10" viewBox="0 0 16 10"><path d="M2 2 L8 8 L14 2" fill="none" stroke="#333" stroke-width="1.6"/></svg>
<div class="a" style="left:0px;top:274px;width:1593px;height:611px;background:#fff"></div>
<div class="a" style="left:0px;top:274px;width:1593px;height:26px;background:#f0eff2"></div>
<div class="a ch" style="left:33px;top:276px;width:217px;height:24px;background:transparent;color:#222">A</div>
<div class="a" style="left:250px;top:277px;width:1px;height:23px;background:#d6d6da"></div>
<div class="a ch" style="left:250px;top:276px;width:117px;height:24px;background:#d3d3d5;color:#217346">B</div>
<div class="a ch" style="left:367px;top:276px;width:117px;height:24px;background:transparent;color:#222">C</div>
<div class="a" style="left:484px;top:277px;width:1px;height:23px;background:#d6d6da"></div>
<div class="a ch" style="left:484px;top:276px;width:224px;height:24px;background:transparent;color:#222">D</div>
<div class="a" style="left:708px;top:277px;width:1px;height:23px;background:#d6d6da"></div>
<div class="a ch" style="left:708px;top:276px;width:225px;height:24px;background:transparent;color:#222">E</div>
<div class="a" style="left:933px;top:277px;width:1px;height:23px;background:#d6d6da"></div>
<div class="a ch" style="left:933px;top:276px;width:224px;height:24px;background:transparent;color:#222">F</div>
<div class="a" style="left:1157px;top:277px;width:1px;height:23px;background:#d6d6da"></div>
<div class="a ch" style="left:1157px;top:276px;width:134px;height:24px;background:transparent;color:#222">G</div>
<div class="a" style="left:1291px;top:277px;width:1px;height:23px;background:#d6d6da"></div>
<div class="a ch" style="left:1291px;top:276px;width:178px;height:24px;background:transparent;color:#222">H</div>
<div class="a" style="left:1469px;top:277px;width:1px;height:23px;background:#d6d6da"></div>
<div class="a ch" style="left:1469px;top:276px;width:180px;height:24px;background:transparent;color:#222">I</div>
<div class="a" style="left:0px;top:299px;width:1593px;height:1px;background:#c8c8cc"></div>
<div class="a" style="left:250px;top:298px;width:117px;height:2px;background:#217346"></div>
<div class="a" style="left:32px;top:276px;width:1px;height:609px;background:#c8c8cc"></div>
<svg class="a" style="left:13px;top:280px;" width="18" height="17" viewBox="0 0 18 17"><path d="M17 0 L17 17 L0 17 Z" fill="#b9b9bd"/></svg>
<div class="a rh" style="left:0;top:300px;width:32px;height:36px;background:#f1f0f2;color:#222">1</div>
<div class="a" style="left:0px;top:335px;width:32px;height:1px;background:#dcdce0"></div>
<div class="a rh" style="left:0;top:336px;width:32px;height:35px;background:#f1f0f2;color:#222">2</div>
<div class="a" style="left:0px;top:370px;width:32px;height:1px;background:#dcdce0"></div>
<div class="a t" style="left:0;top:473px;width:33px;text-align:center;font-size:16.5px;color:#222;line-height:16px">3</div>
<div class="a" style="left:0px;top:491px;width:32px;height:1px;background:#dcdce0"></div>
<div class="a rh" style="left:0;top:492px;width:32px;height:36px;background:#d3d3d5;color:#217346">4</div>
<div class="a" style="left:0px;top:527px;width:32px;height:1px;background:#dcdce0"></div>
<div class="a rh" style="left:0;top:528px;width:32px;height:35px;background:#f1f0f2;color:#222">5</div>
<div class="a" style="left:0px;top:562px;width:32px;height:1px;background:#dcdce0"></div>
<div class="a rh" style="left:0;top:563px;width:32px;height:36px;background:#f1f0f2;color:#222">6</div>
<div class="a" style="left:0px;top:598px;width:32px;height:1px;background:#dcdce0"></div>
<div class="a rh" style="left:0;top:599px;width:32px;height:35px;background:#f1f0f2;color:#222">7</div>
<div class="a" style="left:0px;top:633px;width:32px;height:1px;background:#dcdce0"></div>
<div class="a rh" style="left:0;top:634px;width:32px;height:36px;background:#f1f0f2;color:#222">8</div>
<div class="a" style="left:0px;top:669px;width:32px;height:1px;background:#dcdce0"></div>
<div class="a rh" style="left:0;top:670px;width:32px;height:35px;background:#f1f0f2;color:#222">9</div>
<div class="a" style="left:0px;top:704px;width:32px;height:1px;background:#dcdce0"></div>
<div class="a rh" style="left:0;top:705px;width:32px;height:35px;background:#f1f0f2;color:#222">10</div>
<div class="a" style="left:0px;top:739px;width:32px;height:1px;background:#dcdce0"></div>
<div class="a rh" style="left:0;top:740px;width:32px;height:36px;background:#f1f0f2;color:#222">11</div>
<div class="a" style="left:0px;top:775px;width:32px;height:1px;background:#dcdce0"></div>
<div class="a rh" style="left:0;top:776px;width:32px;height:35px;background:#f1f0f2;color:#222">12</div>
<div class="a" style="left:0px;top:810px;width:32px;height:1px;background:#dcdce0"></div>
<div class="a rh" style="left:0;top:811px;width:32px;height:36px;background:#f1f0f2;color:#222">13</div>
<div class="a" style="left:0px;top:846px;width:32px;height:1px;background:#dcdce0"></div>
<div class="a rh" style="left:0;top:847px;width:32px;height:35px;background:#f1f0f2;color:#222">14</div>
<div class="a" style="left:0px;top:881px;width:32px;height:1px;background:#dcdce0"></div>
<div class="a" style="left:30px;top:491px;width:3px;height:36px;background:#217346"></div>
<div class="a" style="left:33px;top:300px;width:1560px;height:35px;background:#fff"></div>
<div class="a" style="left:33px;top:335px;width:217px;height:156px;background:#cafcfb"></div>
<div class="a" style="left:250px;top:335px;width:1343px;height:156px;background:#e2eeda"></div>
<div class="a" style="left:33px;top:491px;width:1560px;height:36px;background:#dbdadd"></div>
<div class="a" style="left:33px;top:527px;width:1560px;height:35px;background:#cafcfb"></div>
<div class="a" style="left:33px;top:562px;width:217px;height:323px;background:#dce6f4"></div>
<div class="a" style="left:250px;top:562px;width:1343px;height:323px;background:#e2eeda"></div>
<div class="a" style="left:933px;top:300px;width:1px;height:35px;background:#dcdcdc"></div>
<div class="a" style="left:1157px;top:300px;width:1px;height:35px;background:#dcdcdc"></div>
<div class="a" style="left:1291px;top:300px;width:1px;height:35px;background:#dcdcdc"></div>
<div class="a" style="left:1469px;top:300px;width:1px;height:35px;background:#dcdcdc"></div>
<div class="a" style="left:249px;top:335px;width:1px;height:550px;background:#b9c3c3"></div>
<div class="a" style="left:33px;top:335px;width:1560px;height:1px;background:#2e3535"></div>
<div class="a" style="left:250px;top:370px;width:1343px;height:1px;background:#2e3535"></div>
<div class="a" style="left:33px;top:491px;width:1560px;height:1px;background:#2e3535"></div>
<div class="a" style="left:33px;top:527px;width:1560px;height:1px;background:#2e3535"></div>
<div class="a" style="left:33px;top:562px;width:1560px;height:1px;background:#2e3535"></div>
<div class="a" style="left:33px;top:598px;width:1560px;height:1px;background:#2e3535"></div>
<div class="a" style="left:33px;top:633px;width:1560px;height:1px;background:#2e3535"></div>
<div class="a" style="left:33px;top:669px;width:1560px;height:1px;background:#2e3535"></div>
<div class="a" style="left:33px;top:704px;width:1560px;height:1px;background:#2e3535"></div>
<div class="a" style="left:33px;top:739px;width:1560px;height:1px;background:#2e3535"></div>
<div class="a" style="left:33px;top:775px;width:1560px;height:1px;background:#2e3535"></div>
<div class="a" style="left:33px;top:810px;width:1560px;height:1px;background:#2e3535"></div>
<div class="a" style="left:33px;top:846px;width:1560px;height:1px;background:#2e3535"></div>
<div class="a" style="left:33px;top:881px;width:1560px;height:1px;background:#2e3535"></div>
<div class="a" style="left:33px;top:335px;width:1px;height:550px;background:#4a5656"></div>
<div class="a" style="left:367px;top:371px;width:1px;height:514px;background:#2e3535"></div>
<div class="a" style="left:484px;top:371px;width:1px;height:514px;background:#2e3535"></div>
<div class="a" style="left:708px;top:371px;width:1px;height:514px;background:#2e3535"></div>
<div class="a" style="left:933px;top:371px;width:1px;height:514px;background:#2e3535"></div>
<div class="a" style="left:1157px;top:371px;width:1px;height:514px;background:#2e3535"></div>
<div class="a" style="left:1291px;top:335px;width:1px;height:550px;background:#2e3535"></div>
<div class="a" style="left:1469px;top:335px;width:1px;height:550px;background:#2e3535"></div>
<div class="a t" id="f42" style="left:37.0px;top:302.5px;color:#1e1e1e;font-size:19.5px;line-height:26px;-webkit-text-stroke:0.3px #1e1e1e;transform:scaleX(0.9312);transform-origin:0 0">เปรียบเทียบผลการบันทึกข้อมูลพื้นที่ปลูกพืชเศรษฐกิจใน ทบก. รต. google sheet และเอกภาพ</div>
<div class="a t" id="f43" style="left:62.0px;top:398.5px;color:#1e1e1e;font-size:19.5px;line-height:26px;-webkit-text-stroke:0.3px #1e1e1e;transform:scaleX(0.9253);transform-origin:0 0">จังหวัด/อำเภอ/ตำบล</div>
<div class="a t" id="f44" style="left:702.5px;top:337.5px;color:#1e1e1e;font-size:19.5px;line-height:26px;-webkit-text-stroke:0.3px #1e1e1e;transform:scaleX(0.9326);transform-origin:0 0">ข้าวนาปี 2567/68</div>
<div class="a t" id="f45" style="left:289.0px;top:418.5px;color:#1e1e1e;font-size:19.5px;line-height:26px;-webkit-text-stroke:0.3px #1e1e1e;transform:scaleX(0.9193);transform-origin:0 0">ทบก.</div>
<div class="a t" id="f46" style="left:410.0px;top:418.5px;color:#1e1e1e;font-size:19.5px;line-height:26px;-webkit-text-stroke:0.3px #1e1e1e;transform:scaleX(1.0907);transform-origin:0 0">รต.</div>
<div class="a t" id="f47" style="left:494.5px;top:418.5px;color:#1e1e1e;font-size:19.5px;line-height:26px;-webkit-text-stroke:0.3px #1e1e1e;transform:scaleX(0.9723);transform-origin:0 0">google sheet นาปี รอบ 1</div>
<div class="a t" id="f48" style="left:719.0px;top:418.5px;color:#1e1e1e;font-size:19.5px;line-height:26px;-webkit-text-stroke:0.3px #1e1e1e;transform:scaleX(0.9723);transform-origin:0 0">google sheet นาปี รอบ 2</div>
<div class="a t" id="f49" style="left:1014.0px;top:418.5px;color:#1e1e1e;font-size:19.5px;line-height:26px;-webkit-text-stroke:0.3px #1e1e1e;transform:scaleX(0.9118);transform-origin:0 0">เอกภาพ</div>
<div class="a t" id="f50" style="left:1177.5px;top:418.5px;color:#1e1e1e;font-size:19.5px;line-height:26px;-webkit-text-stroke:0.3px #1e1e1e;transform:scaleX(0.8857);transform-origin:0 0">รวมข้าวนาปี</div>
<div class="a t" id="f51" style="left:1326.0px;top:378.5px;color:#1e1e1e;font-size:19.5px;line-height:26px;-webkit-text-stroke:0.3px #1e1e1e;transform:scaleX(0.8852);transform-origin:0 0">ผลต่างระหว่าง</div>
<div class="a t" id="f52" style="left:1310.0px;top:418.5px;color:#1e1e1e;font-size:19.5px;line-height:26px;-webkit-text-stroke:0.3px #1e1e1e;transform:scaleX(0.9921);transform-origin:0 0">google sheet กับ</div>
<div class="a t" id="f53" style="left:1341.5px;top:458.5px;color:#1e1e1e;font-size:19.5px;line-height:26px;-webkit-text-stroke:0.3px #1e1e1e;transform:scaleX(0.9850);transform-origin:0 0">ทบก. (%)</div>
<div class="a t" id="f54" style="left:1505.0px;top:378.5px;color:#1e1e1e;font-size:19.5px;line-height:26px;-webkit-text-stroke:0.3px #1e1e1e;transform:scaleX(0.8852);transform-origin:0 0">ผลต่างระหว่าง</div>
<div class="a t" id="f55" style="left:1489.0px;top:418.5px;color:#1e1e1e;font-size:19.5px;line-height:26px;-webkit-text-stroke:0.3px #1e1e1e;transform:scaleX(0.9921);transform-origin:0 0">google sheet กับ</div>
<div class="a t" id="f56" style="left:1528.0px;top:458.5px;color:#1e1e1e;font-size:19.5px;line-height:26px;-webkit-text-stroke:0.3px #1e1e1e;transform:scaleX(0.9662);transform-origin:0 0">รต. (%)</div>
<div class="a t" id="f57" style="left:37.0px;top:493px;color:#1e1e1e;font-size:19.5px;line-height:26px;-webkit-text-stroke:0.3px #1e1e1e;transform:scaleX(0.8723);transform-origin:0 0">ฉะเชิงเทรา</div>
<div class="c r" style="left:250px;top:492px;width:117px;height:36px;color:#161616;font-size:17.5px;-webkit-text-stroke:0.25px #161616">491,270</div>
<div class="c r" style="left:367px;top:492px;width:117px;height:36px;color:#161616;font-size:17.5px;-webkit-text-stroke:0.25px #161616">644,430</div>
<div class="c r" style="left:484px;top:492px;width:224px;height:36px;color:#161616;font-size:17.5px;-webkit-text-stroke:0.25px #161616">522,628</div>
<div class="c r" style="left:708px;top:492px;width:225px;height:36px;color:#161616;font-size:17.5px;-webkit-text-stroke:0.25px #161616">216,837</div>
<div class="c r" style="left:933px;top:492px;width:224px;height:36px;color:#161616;font-size:17.5px;-webkit-text-stroke:0.25px #161616">633,367</div>
<div class="c r" style="left:1157px;top:492px;width:134px;height:36px;color:#161616;font-size:17.5px;-webkit-text-stroke:0.25px #161616">739,466</div>
<div class="c r" style="left:1291px;top:492px;width:178px;height:36px;color:#161616;font-size:17.5px;-webkit-text-stroke:0.25px #161616">51</div>
<div class="a t" id="f58" style="left:66.0px;top:529px;color:#1e1e1e;font-size:19.5px;line-height:26px;-webkit-text-stroke:0.3px #1e1e1e;transform:scaleX(0.8676);transform-origin:0 0">เมืองฉะเชิงเทรา</div>
<div class="c r" style="left:250px;top:528px;width:117px;height:35px;color:#161616;font-size:17.5px;-webkit-text-stroke:0.25px #161616">74,256</div>
<div class="c r" style="left:367px;top:528px;width:117px;height:35px;color:#161616;font-size:17.5px;-webkit-text-stroke:0.25px #161616">123,616</div>
<div class="c r" style="left:484px;top:528px;width:224px;height:35px;color:#161616;font-size:17.5px;-webkit-text-stroke:0.25px #161616">76,557</div>
<div class="c r" style="left:708px;top:528px;width:225px;height:35px;color:#161616;font-size:17.5px;-webkit-text-stroke:0.25px #161616">38,146</div>
<div class="c r" style="left:933px;top:528px;width:224px;height:35px;color:#161616;font-size:17.5px;-webkit-text-stroke:0.25px #161616">109,234</div>
<div class="c r" style="left:1157px;top:528px;width:134px;height:35px;color:#161616;font-size:17.5px;-webkit-text-stroke:0.25px #161616">114,704</div>
<div class="c r" style="left:1291px;top:528px;width:178px;height:35px;color:#161616;font-size:17.5px;-webkit-text-stroke:0.25px #161616">54</div>
<div class="c " style="left:1469px;top:528px;width:180px;height:35px;padding-left:5px;color:#161616;font-size:17px">-</div>
<div class="a t" id="f59" style="left:83.0px;top:564px;color:#1e1e1e;font-size:19.5px;line-height:26px;-webkit-text-stroke:0.3px #1e1e1e;transform:scaleX(0.8987);transform-origin:0 0">หน้าเมือง</div>
<div class="c d" style="left:250px;top:563px;width:117px;height:36px;color:#555;font-size:17px">-</div>
<div class="c d" style="left:367px;top:563px;width:117px;height:36px;color:#555;font-size:17px">-</div>
<div class="c d" style="left:484px;top:563px;width:224px;height:36px;color:#555;font-size:17px">-</div>
<div class="c d" style="left:708px;top:563px;width:225px;height:36px;color:#555;font-size:17px">-</div>
<div class="c d" style="left:933px;top:563px;width:224px;height:36px;color:#555;font-size:17px">-</div>
<div class="c d" style="left:1157px;top:563px;width:134px;height:36px;color:#555;font-size:17px">-</div>
<div class="a t" id="f60" style="left:83.0px;top:600px;color:#1e1e1e;font-size:19.5px;line-height:26px;-webkit-text-stroke:0.3px #1e1e1e;transform:scaleX(0.8511);transform-origin:0 0">ท่าไข่</div>
<div class="c r" style="left:250px;top:599px;width:117px;height:35px;color:#4a4a4a;font-size:17.5px;-webkit-text-stroke:0.1px #4a4a4a">7,534</div>
<div class="c r" style="left:367px;top:599px;width:117px;height:35px;color:#4a4a4a;font-size:17.5px;-webkit-text-stroke:0.1px #4a4a4a">7,850</div>
<div class="c r" style="left:484px;top:599px;width:224px;height:35px;color:#4a4a4a;font-size:17.5px;-webkit-text-stroke:0.1px #4a4a4a">7,432</div>
<div class="c r" style="left:708px;top:599px;width:225px;height:35px;color:#4a4a4a;font-size:17.5px;-webkit-text-stroke:0.1px #4a4a4a">5,085</div>
<div class="c d" style="left:933px;top:599px;width:224px;height:35px;color:#555;font-size:17px">-</div>
<div class="c r" style="left:1157px;top:599px;width:134px;height:35px;color:#4a4a4a;font-size:17.5px;-webkit-text-stroke:0.1px #4a4a4a">12,518</div>
<div class="a t" id="f61" style="left:83.0px;top:635px;color:#1e1e1e;font-size:19.5px;line-height:26px;-webkit-text-stroke:0.3px #1e1e1e;transform:scaleX(0.8889);transform-origin:0 0">บ้านใหม่</div>
<div class="c d" style="left:250px;top:634px;width:117px;height:36px;color:#555;font-size:17px">-</div>
<div class="c d" style="left:367px;top:634px;width:117px;height:36px;color:#555;font-size:17px">-</div>
<div class="c d" style="left:484px;top:634px;width:224px;height:36px;color:#555;font-size:17px">-</div>
<div class="c d" style="left:708px;top:634px;width:225px;height:36px;color:#555;font-size:17px">-</div>
<div class="c d" style="left:933px;top:634px;width:224px;height:36px;color:#555;font-size:17px">-</div>
<div class="c d" style="left:1157px;top:634px;width:134px;height:36px;color:#555;font-size:17px">-</div>
<div class="a t" id="f62" style="left:83.0px;top:671px;color:#1e1e1e;font-size:19.5px;line-height:26px;-webkit-text-stroke:0.3px #1e1e1e;transform:scaleX(0.8873);transform-origin:0 0">คลองนา</div>
<div class="c r" style="left:250px;top:670px;width:117px;height:35px;color:#4a4a4a;font-size:17.5px;-webkit-text-stroke:0.1px #4a4a4a">186</div>
<div class="c r" style="left:367px;top:670px;width:117px;height:35px;color:#4a4a4a;font-size:17.5px;-webkit-text-stroke:0.1px #4a4a4a">171</div>
<div class="c d" style="left:484px;top:670px;width:224px;height:35px;color:#555;font-size:17px">-</div>
<div class="c d" style="left:708px;top:670px;width:225px;height:35px;color:#555;font-size:17px">-</div>
<div class="c d" style="left:933px;top:670px;width:224px;height:35px;color:#555;font-size:17px">-</div>
<div class="c d" style="left:1157px;top:670px;width:134px;height:35px;color:#555;font-size:17px">-</div>
<div class="c " style="left:1469px;top:670px;width:180px;height:35px;padding-left:5px;color:#444;font-size:17px">-</div>
<div class="a t" id="f63" style="left:83.0px;top:706px;color:#1e1e1e;font-size:19.5px;line-height:26px;-webkit-text-stroke:0.3px #1e1e1e;transform:scaleX(0.9011);transform-origin:0 0">บางตีนเป็ด</div>
<div class="c d" style="left:250px;top:705px;width:117px;height:35px;color:#555;font-size:17px">-</div>
<div class="c d" style="left:367px;top:705px;width:117px;height:35px;color:#555;font-size:17px">-</div>
<div class="c r" style="left:484px;top:705px;width:224px;height:35px;color:#4a4a4a;font-size:17.5px;-webkit-text-stroke:0.1px #4a4a4a">101</div>
<div class="c d" style="left:708px;top:705px;width:225px;height:35px;color:#555;font-size:17px">-</div>
<div class="c d" style="left:933px;top:705px;width:224px;height:35px;color:#555;font-size:17px">-</div>
<div class="a t" id="f64" style="left:83.0px;top:741px;color:#1e1e1e;font-size:19.5px;line-height:26px;-webkit-text-stroke:0.3px #1e1e1e;transform:scaleX(0.9074);transform-origin:0 0">บางไผ่</div>
<div class="c d" style="left:250px;top:740px;width:117px;height:36px;color:#555;font-size:17px">-</div>
<div class="c r" style="left:367px;top:740px;width:117px;height:36px;color:#4a4a4a;font-size:17.5px;-webkit-text-stroke:0.1px #4a4a4a">19</div>
<div class="c d" style="left:484px;top:740px;width:224px;height:36px;color:#555;font-size:17px">-</div>
<div class="c d" style="left:708px;top:740px;width:225px;height:36px;color:#555;font-size:17px">-</div>
<div class="c d" style="left:933px;top:740px;width:224px;height:36px;color:#555;font-size:17px">-</div>
<div class="a t" id="f65" style="left:83.0px;top:777px;color:#1e1e1e;font-size:19.5px;line-height:26px;-webkit-text-stroke:0.3px #1e1e1e;transform:scaleX(0.9058);transform-origin:0 0">คลองจุกกระเฌอ</div>
<div class="c d" style="left:250px;top:776px;width:117px;height:35px;color:#555;font-size:17px">-</div>
<div class="c d" style="left:367px;top:776px;width:117px;height:35px;color:#555;font-size:17px">-</div>
<div class="c d" style="left:484px;top:776px;width:224px;height:35px;color:#555;font-size:17px">-</div>
<div class="c d" style="left:708px;top:776px;width:225px;height:35px;color:#555;font-size:17px">-</div>
<div class="c d" style="left:933px;top:776px;width:224px;height:35px;color:#555;font-size:17px">-</div>
<div class="a t" id="f66" style="left:83.0px;top:812px;color:#1e1e1e;font-size:19.5px;line-height:26px;-webkit-text-stroke:0.3px #1e1e1e;transform:scaleX(0.9130);transform-origin:0 0">บางแก้ว</div>
<div class="c r" style="left:250px;top:811px;width:117px;height:36px;color:#4a4a4a;font-size:17.5px;-webkit-text-stroke:0.1px #4a4a4a">5,604</div>
<div class="c r" style="left:367px;top:811px;width:117px;height:36px;color:#4a4a4a;font-size:17.5px;-webkit-text-stroke:0.1px #4a4a4a">10,954</div>
<div class="c r" style="left:484px;top:811px;width:224px;height:36px;color:#4a4a4a;font-size:17.5px;-webkit-text-stroke:0.1px #4a4a4a">5,641</div>
<div class="c r" style="left:708px;top:811px;width:225px;height:36px;color:#4a4a4a;font-size:17.5px;-webkit-text-stroke:0.1px #4a4a4a">4,843</div>
<div class="c d" style="left:933px;top:811px;width:224px;height:36px;color:#555;font-size:17px">-</div>
<div class="a t" id="f67" style="left:83.0px;top:848px;color:#1e1e1e;font-size:19.5px;line-height:26px;-webkit-text-stroke:0.3px #1e1e1e;transform:scaleX(0.9054);transform-origin:0 0">บางขวัญ</div>
<div class="c r" style="left:250px;top:847px;width:117px;height:35px;color:#4a4a4a;font-size:17.5px;-webkit-text-stroke:0.1px #4a4a4a">5,948</div>
<div class="c r" style="left:367px;top:847px;width:117px;height:35px;color:#4a4a4a;font-size:17.5px;-webkit-text-stroke:0.1px #4a4a4a">10,715</div>
<div class="c r" style="left:484px;top:847px;width:224px;height:35px;color:#4a4a4a;font-size:17.5px;-webkit-text-stroke:0.1px #4a4a4a">5,640</div>
<div class="c r" style="left:708px;top:847px;width:225px;height:35px;color:#4a4a4a;font-size:17.5px;-webkit-text-stroke:0.1px #4a4a4a">4,312</div>
<div class="c d" style="left:933px;top:847px;width:224px;height:35px;color:#555;font-size:17px">-</div>
<svg class="a" style="left:1158px;top:563px;" width="9" height="9" viewBox="0 0 9 9"><path d="M0 0 H8 L0 8 Z" fill="#1f7a2a"/></svg>
<svg class="a" style="left:1158px;top:599px;" width="9" height="9" viewBox="0 0 9 9"><path d="M0 0 H8 L0 8 Z" fill="#1f7a2a"/></svg>
<svg class="a" style="left:1158px;top:634px;" width="9" height="9" viewBox="0 0 9 9"><path d="M0 0 H8 L0 8 Z" fill="#1f7a2a"/></svg>
<svg class="a" style="left:1158px;top:670px;" width="9" height="9" viewBox="0 0 9 9"><path d="M0 0 H8 L0 8 Z" fill="#1f7a2a"/></svg>
<svg class="a" style="left:1158px;top:705px;" width="9" height="9" viewBox="0 0 9 9"><path d="M0 0 H8 L0 8 Z" fill="#1f7a2a"/></svg>
<svg class="a" style="left:1158px;top:740px;" width="9" height="9" viewBox="0 0 9 9"><path d="M0 0 H8 L0 8 Z" fill="#1f7a2a"/></svg>
<svg class="a" style="left:1158px;top:776px;" width="9" height="9" viewBox="0 0 9 9"><path d="M0 0 H8 L0 8 Z" fill="#1f7a2a"/></svg>
<svg class="a" style="left:1158px;top:811px;" width="9" height="9" viewBox="0 0 9 9"><path d="M0 0 H8 L0 8 Z" fill="#1f7a2a"/></svg>
<svg class="a" style="left:1158px;top:847px;" width="9" height="9" viewBox="0 0 9 9"><path d="M0 0 H8 L0 8 Z" fill="#1f7a2a"/></svg>
<svg class="a" style="left:368px;top:528px;" width="9" height="9" viewBox="0 0 9 9"><path d="M0 0 H8 L0 8 Z" fill="#1f7a2a"/></svg>
<div class="a" style="left:248.5px;top:490.5px;width:120px;height:38px;border:1.5px solid #2c5244;box-sizing:border-box"></div>
<div class="a" style="left:250px;top:492px;width:117px;height:35px;border:1px solid rgba(255,255,255,.55);box-sizing:border-box"></div>
<div class="a" style="left:364px;top:524px;width:5px;height:5px;background:#2c5244;border:1px solid #fff;box-sizing:border-box"></div>
<div class="a" style="left:1593px;top:274px;width:25px;height:611px;background:#f0eff2"></div>
<svg class="a" style="left:1600px;top:282px;" width="12" height="9" viewBox="0 0 12 9"><path d="M6 1 L11 8 H1 Z" fill="#666" stroke="#666" stroke-width="1" stroke-linejoin="round"/></svg>
<div class="a" style="left:1601px;top:298px;width:10px;height:22px;background:#707070;border-radius:5px"></div>
<svg class="a" style="left:1600px;top:870px;" width="12" height="9" viewBox="0 0 12 9"><path d="M6 8 L11 1 H1 Z" fill="#666" stroke="#666" stroke-width="1" stroke-linejoin="round"/></svg>
<div class="a" style="left:0px;top:885px;width:1618px;height:41px;background:#e9e9ee"></div>
<svg class="a" style="left:28px;top:898px;" width="12" height="16" viewBox="0 0 12 16"><path d="M9 2 L3 8 L9 14" fill="none" stroke="#999" stroke-width="1.5"/></svg>
<svg class="a" style="left:69px;top:898px;" width="12" height="16" viewBox="0 0 12 16"><path d="M3 2 L9 8 L3 14" fill="none" stroke="#999" stroke-width="1.5"/></svg>
<div class="a" style="left:140px;top:886px;width:142px;height:35px;background:#fff;border-radius:4px"></div>
<div class="a t" id="f68" style="left:150.0px;top:892px;font-size:17px;line-height:22px;font-weight:bold;color:#222;transform:scaleX(1.0702);transform-origin:0 0">ข้อมูลรายตำบล</div>
<div class="a" style="left:150px;top:915px;width:122px;height:3px;background:#1e7a48;border-radius:1px"></div>
<svg class="a" style="left:340px;top:897px;" width="17" height="17" viewBox="0 0 17 17"><path d="M8.5 1 V16 M1 8.5 H16" stroke="#444" stroke-width="1.6"/></svg>
<svg class="a" style="left:877px;top:898px;" width="6" height="16" viewBox="0 0 6 16"><circle cx="3" cy="2.5" r="1.5" fill="#444"/><circle cx="3" cy="8" r="1.5" fill="#444"/><circle cx="3" cy="13.5" r="1.5" fill="#444"/></svg>
<div class="a" style="left:901px;top:895px;width:360px;height:21px;background:#f6f6f9;border-radius:10px"></div>
<svg class="a" style="left:906px;top:900px;" width="10" height="12" viewBox="0 0 10 12"><path d="M9 1 L1 6 L9 11 Z" fill="#777" stroke="#777" stroke-linejoin="round"/></svg>
<div class="a" style="left:923px;top:900px;width:81px;height:10px;background:#767676;border-radius:5px"></div>
<div class="a" style="left:0px;top:925px;width:1618px;height:1px;background:#d5d5d9"></div>
<div class="a" style="left:0px;top:926px;width:1618px;height:28px;background:#f7f7f9"></div>
<div class="a t" id="f69" style="left:13.0px;top:932px;font-size:13px;color:#333;line-height:18px;transform:scaleX(0.9091);transform-origin:0 0">พร้อม</div>
<svg class="a" style="left:66px;top:930px;" width="20" height="20" viewBox="0 0 20 20"><circle cx="9" cy="3.5" r="2.3" fill="none" stroke="#333" stroke-width="1.2"/><path d="M2 6.5 L16 6.5 M9 6.5 V11 L5 18 M9 11 L11 14" fill="none" stroke="#333" stroke-width="1.3"/><path d="M12 13 L18 19 M18 13 L12 19" stroke="#333" stroke-width="1.3"/></svg>
<div class="a t" id="f70" style="left:89.0px;top:932px;font-size:13px;color:#222;line-height:18px;font-weight:bold;transform:scaleX(1.0227);transform-origin:0 0">การช่วยสำหรับการเข้าถึง: โปรดศึกษาคำแนะนำ</div>
<div class="a" style="left:1244px;top:927px;width:50px;height:27px;background:#e4e4e8"></div>
<svg class="a" style="left:1259px;top:931px;" width="19" height="19" viewBox="0 0 19 19"><rect x="1" y="1" width="17" height="17" fill="none" stroke="#333" stroke-width="1.5"/><path d="M6.7 1 V18 M12.3 1 V18 M1 6.7 H18 M1 12.3 H18" stroke="#333" stroke-width="1.5"/></svg>
<svg class="a" style="left:1310px;top:931px;" width="19" height="19" viewBox="0 0 19 19"><rect x="1" y="1" width="17" height="17" fill="none" stroke="#333" stroke-width="1.5"/><rect x="4.5" y="4" width="10" height="11" fill="none" stroke="#333" stroke-width="1.2"/><path d="M6.5 7 H12.5 M6.5 9.5 H12.5 M6.5 12 H12.5" stroke="#333" stroke-width="1"/></svg>
<svg class="a" style="left:1360px;top:931px;" width="19" height="19" viewBox="0 0 19 19"><rect x="1" y="1" width="17" height="17" fill="none" stroke="#333" stroke-width="1.5"/><path d="M1 11 H11 V1 M6 1 V8" fill="none" stroke="#333" stroke-width="1.4"/></svg>
<div class="a" style="left:1402px;top:939px;width:8px;height:1.5px;background:#555"></div>
<div class="a" style="left:1419px;top:939px;width:125px;height:2px;background:#666"></div>
<div class="a" style="left:1478px;top:932px;width:7px;height:15px;background:#666;border-radius:1px"></div>
<svg class="a" style="left:1548px;top:933px;" width="13" height="13" viewBox="0 0 13 13"><path d="M6.5 1 V12 M1 6.5 H12" stroke="#555" stroke-width="1.3"/></svg>
<div class="a t" id="f71" style="left:1577.0px;top:933px;font-size:13px;color:#333;line-height:16px;transform:scaleX(0.9925);transform-origin:0 0">100%</div>
<div class="a" style="left:0px;top:954px;width:1618px;height:4px;background:#000"></div>
<div class="a" style="left:0px;top:958px;width:1618px;height:53px;background:#222223"></div>
<svg class="a" style="left:574px;top:970px;" width="28" height="30" viewBox="0 0 28 30"><path d="M24 2.5 V27.5 L3 15 Z" fill="none" stroke="#cfcfcf" stroke-width="2.4" stroke-linejoin="round"/></svg>
<svg class="a" style="left:793px;top:969px;" width="32" height="32" viewBox="0 0 32 32"><circle cx="16" cy="16" r="12.5" fill="none" stroke="#cfcfcf" stroke-width="2.4"/></svg>
<svg class="a" style="left:1016px;top:971px;" width="28" height="28" viewBox="0 0 28 28"><rect x="2.5" y="2.5" width="22" height="22" rx="1.5" fill="none" stroke="#cfcfcf" stroke-width="2.4"/></svg>
<svg class="a" style="left:0px;top:721px;" width="78" height="78" viewBox="0 0 78 78"><circle cx="38.5" cy="39.5" r="37.5" fill="rgba(45,45,50,0.78)" stroke="rgba(150,150,155,0.7)" stroke-width="2.2"/><path d="M26 54 L29 44 L46 27 L53 34 L36 51 Z" fill="#fff"/><path d="M48 25 L51 22 Q52.5 20.5 54 22 L57 25 Q58.5 26.5 57 28 L54 31 Z" fill="#fff"/></svg>
<svg class="a" style="left:1222px;top:708px;" width="371" height="208" viewBox="0 0 371 208">
<defs>
<linearGradient id="sky" x1="0" y1="0" x2="0" y2="1"><stop offset="0" stop-color="#1d3a85"/><stop offset="0.25" stop-color="#3f6fb5"/><stop offset="0.5" stop-color="#b9d0e6"/><stop offset="0.62" stop-color="#eef2f2"/><stop offset="1" stop-color="#e6ece6"/></linearGradient>
<linearGradient id="fld" x1="0" y1="0" x2="0" y2="1"><stop offset="0" stop-color="#6aa05a"/><stop offset="1" stop-color="#9ccc80"/></linearGradient>
<radialGradient id="cl1" cx="0.5" cy="0.5" r="0.5"><stop offset="0" stop-color="#fff" stop-opacity=".95"/><stop offset="1" stop-color="#fff" stop-opacity="0"/></radialGradient>
<clipPath id="vc"><rect x="0" y="0" width="371" height="208" rx="11"/></clipPath>
<filter id="bl" x="-5%" y="-5%" width="110%" height="110%"><feGaussianBlur stdDeviation="0.9"/></filter>
</defs>
<g clip-path="url(#vc)"><g filter="url(#bl)">
<rect width="371" height="208" fill="#55575a"/>
<rect x="0" y="0" width="371" height="14" fill="#6a6c6e"/>
<rect x="0" y="0" width="371" height="5" fill="#c9cbcc"/>
<rect x="4" y="0" width="90" height="7" rx="3" fill="#f7f8f8"/>
<rect x="265" y="0" width="90" height="7" rx="3" fill="#f7f8f8"/>
<rect x="176" y="1" width="10" height="10" fill="#a0a2a4"/>
<rect x="0" y="12" width="371" height="3" fill="#a88a5a"/>
<rect x="0" y="15" width="357" height="135" fill="url(#sky)"/>
<ellipse cx="40" cy="72" rx="45" ry="18" fill="url(#cl1)"/>
<ellipse cx="270" cy="50" rx="40" ry="14" fill="url(#cl1)"/>
<ellipse cx="330" cy="58" rx="40" ry="16" fill="url(#cl1)"/>
<rect x="357" y="15" width="14" height="140" fill="#7a6a50"/>
<rect x="9" y="33" width="30" height="46" fill="#4a3a30"/><rect x="12" y="36" width="24" height="40" fill="#c8bfb0"/><rect x="15" y="45" width="7" height="28" fill="#5a5048"/><rect x="25" y="45" width="7" height="28" fill="#e8e4dc"/>
<rect x="52" y="35" width="31" height="46" fill="#ded6c4"/><rect x="56" y="40" width="23" height="36" fill="#f0ece4"/><rect x="60" y="55" width="6" height="20" fill="#b0a890"/><rect x="70" y="50" width="6" height="25" fill="#c0b8a0"/>
<circle cx="183" cy="51" r="17" fill="#dde4e6" stroke="#9aaeb4" stroke-width="2"/><circle cx="183" cy="51" r="9" fill="#c0ccd0"/>
<rect x="118" y="78" width="135" height="6" fill="#5e8a6a" opacity=".75"/>
<rect x="133" y="90" width="105" height="4" fill="#6a8a70" opacity=".55"/>
<rect x="133" y="99" width="110" height="4" fill="#6a8a70" opacity=".55"/>
<path d="M287 66 L292 50 H328 L333 66 Z" fill="#cc1f2a"/>
<path d="M303 50 q2 -14 6 -22 q4 8 6 22 z" fill="#e8b838"/><circle cx="309" cy="38" r="5" fill="#f0c040"/>
<path d="M0 108 L20 92 Q45 84 70 96 L95 104 L95 130 L0 130 Z" fill="#6a9a86"/>
<path d="M250 112 L262 90 L274 102 L292 84 L312 100 L330 94 L345 58 L352 100 L357 104 L357 128 L250 128 Z" fill="#dcd8cc"/>
<path d="M258 98 L266 88 L272 100 Z M286 92 L294 82 L300 94 Z" fill="#b8884a"/>
<path d="M262 112 h90 v14 h-90z" fill="#a89a88" opacity=".6"/>
<path d="M0 104 Q40 98 80 106 Q140 100 200 112 Q260 108 357 114 L357 126 L0 126 Z" fill="#4a7a3e"/>
<path d="M250 112 L262 90 L274 102 L292 84 L312 100 L330 94 L345 76 L352 100 L357 104 L357 124 L250 124 Z" fill="#dcdad2"/>
<path d="M250 96 L256 84 L260 98 Z M292 86 L298 78 L302 90 Z" fill="#c8904a"/>
<rect x="262" y="104" width="86" height="20" fill="#8a8c80" opacity=".55"/>
<path d="M345 90 h8 v40 h-8z" fill="#3a4a44"/>
<rect x="0" y="124" width="357" height="24" fill="url(#fld)"/>
<rect x="100" y="124" width="66" height="12" fill="#b8d4c8" opacity=".8"/>
<path d="M45 126 Q70 118 95 124 L130 150 L45 150 Z" fill="#c8b070" opacity=".85"/>
<circle cx="55" cy="140" r="7" fill="#7ab050"/><circle cx="68" cy="143" r="6" fill="#8ac060"/>
<rect x="0" y="148" width="371" height="6" fill="#b89a78"/>
<rect x="0" y="154" width="371" height="8" fill="#5a2e28"/>
<rect x="352" y="99" width="15" height="48" fill="#eeeef2"/><path d="M352 105 h15 v6 h-15z M352 135 h15 v6 h-15z" fill="#d02a30"/><rect x="352" y="116" width="15" height="14" fill="#2a3a8a"/>
<rect x="357" y="0" width="14" height="145" fill="#7a6a4a"/>
<rect x="195" y="120" width="12" height="38" fill="#1e1e22"/>
<path d="M168 160 Q170 136 186 132 Q204 136 208 160 Z" fill="#cddcec"/>
<circle cx="186" cy="124" r="8.5" fill="#d0a488"/><path d="M177 122 Q186 110 195 122 L195 116 Q186 109 177 116 Z" fill="#1c1c1c"/>
<rect x="240" y="133" width="10" height="33" rx="3" fill="#dfeee6"/>
<path d="M0 170 L100 162 L260 158 L371 168 L371 208 L0 208 Z" fill="#dde8de"/>
<path d="M138 163 L250 158 L250 208 L138 208 Z" fill="#8fc072"/>
<path d="M144 164 V208 M152 163 V208 M160 163 V208 M168 162 V208 M176 162 V208 M184 161 V208 M192 161 V208 M200 161 V208 M208 160 V208 M216 160 V208 M224 160 V208 M232 159 V208 M240 159 V208" stroke="#72a656" stroke-width="2"/>
<path d="M250 160 L371 176 L371 208 L250 208 Z" fill="#cfe2c8"/>
<path d="M0 150 Q12 146 25 156 L28 208 L0 208 Z" fill="#2e8a4e"/>
<circle cx="6" cy="130" r="9" fill="#c09070"/><path d="M-4 126 Q6 112 14 124 L12 118 Q4 110 -4 118 Z" fill="#1a1414"/>
<path d="M16 205 L15 172 Q20 150 40 146 Q54 150 58 168 L90 178 L88 186 L58 182 L56 205 Z" fill="#2a98cc"/>
<circle cx="38" cy="134" r="10" fill="#b88a6a"/><path d="M26 132 Q36 116 50 128 L49 122 Q38 112 27 122 Z" fill="#141010"/><path d="M28 128 L18 156 L25 154 Z" fill="#141010"/>
<path d="M98 198 L108 150 L117 152 L110 200 Z" fill="#9aaa98"/>
<path d="M30 208 L34 186 L100 182 L104 208 Z" fill="#e6eae8"/>
<path d="M104 208 L100 186 L130 184 L142 208 Z" fill="#2c3034"/>
<path d="M289 140 Q290 120 310 119 Q335 120 342 142 L300 146 Z" fill="#161210"/>
<path d="M298 146 Q312 138 340 142 L356 178 L322 184 L300 170 Z" fill="#2e8a4a"/>
<rect x="285" y="153" width="13" height="35" rx="3" fill="#b6dcc4"/>
<rect x="314" y="158" width="17" height="38" rx="4" fill="#e4d0da" opacity=".95"/>
<path d="M357 145 Q371 142 371 150 V180 H357 Z" fill="#f2f2f2"/>
</g></g>
</svg>
</body></html>
